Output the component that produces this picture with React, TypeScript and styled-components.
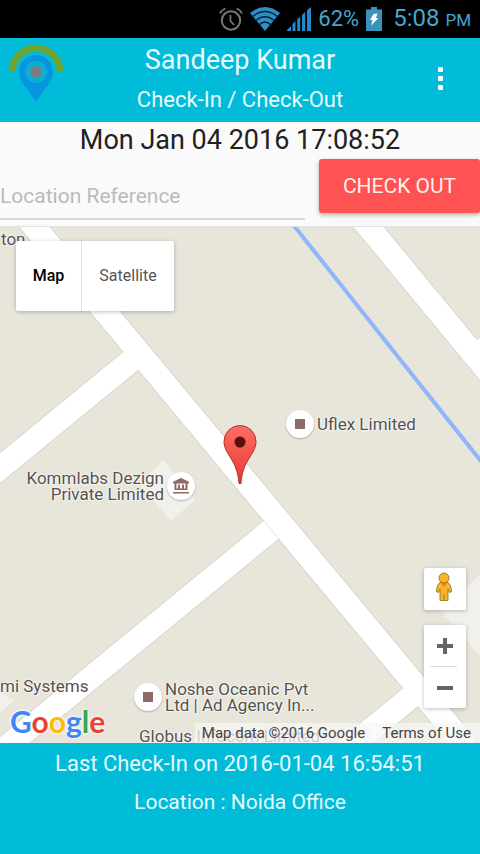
import React from 'react';
import styled, { createGlobalStyle } from 'styled-components';

const GlobalStyle = createGlobalStyle`
  *, *::before, *::after { box-sizing: border-box; }
  body { margin: 0; background: #fafafa; font-family: Roboto, "Noto Sans", sans-serif; }
  button, input { font: inherit; }
`;

const CYAN = '#00bcd8';
const HOLO = '#45a6d2';

const Screen = styled.div`
  display: flex;
  flex-direction: column;
  min-height: 100vh;
`;

const StatusBar = styled.div`
  display: flex;
  align-items: center;
  justify-content: flex-end;
  gap: 7px;
  height: 38px;
  padding-right: 9px;
  background: #000;
  color: ${HOLO};
  svg { display: block; flex: none; }
`;

const Percent = styled.span`
  font-size: 22px;
  line-height: 40px;
`;

const Clock = styled.span`
  font-size: 24px;
  line-height: 40px;
  margin-left: 4px;
  small { font-size: 17px; margin-left: 6px; }
`;

const Header = styled.header`
  display: grid;
  grid-template-columns: 72px 1fr 72px;
  align-items: center;
  height: 84px;
  background: ${CYAN};
  color: #e6fbff;
`;

const Logo = styled.svg`
  display: block;
  margin: 0 0 14px 8px;
`;

const Titles = styled.div`
  text-align: center;
  white-space: nowrap;
`;

const UserName = styled.h1`
  margin: 0;
  font-size: 27px;
  font-weight: 400;
  line-height: 40px;
`;

const PageName = styled.h2`
  margin: 0;
  font-size: 22px;
  font-weight: 400;
  line-height: 40px;
`;

const MenuButton = styled.button`
  display: flex;
  flex-direction: column;
  align-items: center;
  gap: 4px;
  justify-self: center;
  width: 48px;
  padding: 11px 0 14px;
  margin-right: 8px;
  border: 0;
  background: none;
`;

const Dot = styled.span`
  width: 5px;
  height: 5px;
  border-radius: 1px;
  background: #fff;
`;

const CheckForm = styled.form`
  display: grid;
  grid-template-columns: 1fr 161px;
  column-gap: 14px;
  align-content: start;
  background: #fafafa;
  height: 105px;
  border-bottom: 1px solid #e2e2e2;
`;

const Timestamp = styled.time`
  grid-column: 1 / -1;
  font-size: 27px;
  line-height: 37px;
  height: 37px;
  text-align: center;
  color: #212121;
`;

const LocationInput = styled.input`
  width: 100%;
  min-width: 0;
  height: 46px;
  margin-top: 15px;
  padding: 0;
  border: 0;
  border-bottom: 2px solid #d8d8d8;
  border-radius: 0;
  background: transparent;
  font-size: 21px;
  color: #212121;
  outline: 0;
  &::placeholder { color: #bababa; opacity: 1; }
`;

const CheckOutButton = styled.button`
  height: 54px;
  padding: 0;
  border: 0;
  border-radius: 3px;
  background: #ff5252;
  box-shadow: 0 2px 4px rgba(0, 0, 0, 0.3);
  color: #fff0ee;
  font-size: 21px;
`;

const MapView = styled.main`
  position: relative;
  flex: 1;
  min-height: 320px;
  overflow: hidden;
  background: #e8e5db;
`;

const MapDrawing = styled.svg`
  position: absolute;
  inset: 0;
  width: 100%;
  height: 100%;
`;

const Place = styled.div<{ $x: number; $y: number; $end?: boolean }>`
  position: absolute;
  ${p => (p.$end ? `right: calc(50% - ${p.$x}px);` : `left: calc(50% + ${p.$x}px);`)}
  top: calc(50% + ${p => p.$y}px);
  display: flex;
  align-items: center;
  flex-direction: ${p => (p.$end ? 'row-reverse' : 'row')};
  gap: 3px;
  text-align: ${p => (p.$end ? 'right' : 'left')};
  font-size: 17px;
  line-height: 16px;
  white-space: nowrap;
  color: #55524f;
  text-shadow: 0 0 2px #fff, 0 0 2px #fff, 1px 1px 1px #f4f2ec;
`;

const PlaceDot = styled.span`
  display: flex;
  align-items: center;
  justify-content: center;
  width: 28px;
  height: 28px;
  border-radius: 50%;
  background: #fff;
  box-shadow: 0 1px 2px rgba(0, 0, 0, 0.25);
`;

const Square = styled.span`
  width: 10px;
  height: 10px;
  background: #8d6a66;
`;

const Pin = styled.svg`
  position: absolute;
  left: calc(50% - 18px);
  top: calc(50% - 61px);
`;

const MapTypes = styled.div`
  position: absolute;
  left: 16px;
  top: 14px;
  display: flex;
  height: 70px;
  border-radius: 2px;
  background: #fff;
  box-shadow: 0 1px 4px rgba(0, 0, 0, 0.25);
`;

const MapType = styled.button<{ $active?: boolean }>`
  padding: 0 16px 2px;
  border: 0;
  background: none;
  font-size: 16px;
  font-weight: ${p => (p.$active ? 500 : 400)};
  color: ${p => (p.$active ? '#000' : '#565656')};
  min-width: 65px;
  & + & { min-width: 93px; border-left: 1px solid #ddd; }
`;

const Controls = styled.div`
  position: absolute;
  right: 14px;
  bottom: 35px;
  display: flex;
  flex-direction: column;
  gap: 15px;
  width: 42px;
`;

const ControlBox = styled.div`
  display: flex;
  flex-direction: column;
  border-radius: 2px;
  background: #fff;
  box-shadow: 0 1px 4px rgba(0, 0, 0, 0.25);
`;

const ControlButton = styled.button`
  display: flex;
  align-items: center;
  justify-content: center;
  width: 42px;
  height: 41px;
  padding: 0;
  border: 0;
  background: none;
`;

const StreetViewButton = styled(ControlButton)`
  height: 42px;
  padding: 0 2px 4px 0;
`;

const Divider = styled.span`
  height: 1px;
  margin: 0 9px 0 6px;
  background: #dcdcdc;
`;

const GoogleLogo = styled.a`
  position: absolute;
  left: 10px;
  bottom: 4px;
  font-family: Lato, sans-serif;
  font-size: 30px;
  font-weight: 700;
  line-height: 36px;
  text-decoration: none;
  text-shadow: 0 0 2px #fff, 0 0 2px #fff, 0 0 3px #fff;
`;

const Letter = styled.span<{ $color: string }>`
  color: ${p => p.$color};
`;

const Credits = styled.div`
  position: absolute;
  right: 0;
  bottom: 0;
  display: flex;
  gap: 1px;
  font-size: 15px;
  line-height: 20px;
  color: #444;
  > * {
    padding: 0 9px 0 7px;
    background: rgba(245, 245, 245, 0.75);
    color: inherit;
    text-decoration: none;
  }
`;

const Footer = styled.footer`
  height: 111px;
  padding-top: 2px;
  background: ${CYAN};
  color: #e6fbff;
  line-height: 38px;
  text-align: center;
`;

const FooterLine = styled.p<{ $large?: boolean }>`
  margin: 0;
  font-size: ${p => (p.$large ? 22 : 21)}px;
`;

const AlarmIcon = () => (
  <svg width="24" height="26" viewBox="0 0 24 26" fill="none" stroke="#7d7774" strokeWidth="2" aria-hidden="true">
    <circle cx="12" cy="14.5" r="9.2" />
    <path d="M11.5 9v6l3.5 4M1 7.5Q2.500 4 6.500 2.500M23 7.500Q21.500 4 17.500 2.500" strokeWidth="1.700" />
  </svg>
);

const WifiIcon = () => (
  <svg width="30" height="24" viewBox="0 0 30 24" aria-hidden="true">
    <path d="M15 24L0 6Q15-6 30 6Z" fill="#2d8fc4" />
    <g fill="none" stroke="#06202e" strokeWidth="1.300">
      <path d="M2 10Q15-1 28 10M5.500 14Q15 5.500 24.500 14M9 18Q15 12 21 18" />
    </g>
  </svg>
);

const SignalIcon = () => (
  <svg width="24" height="24" viewBox="0 0 24 24" fill="#2188cd" aria-hidden="true">
    <path d="M0 24v-1l4-4v5zM5.500 24v-7l3-3v10zM10.200 24V12.500l3-3V24zM15 24V8l3.200-3.200V24zM20 24V3l4-3v24z" />
  </svg>
);

const BatteryIcon = () => (
  <svg width="16" height="24" viewBox="0 0 16 24" aria-hidden="true">
    <path d="M5 0h6v2.500h5V24H0V2.500h5z" fill="#3b93bd" />
    <path d="M7.500 7l4-.5-1.500 4.500h2.500L5 18.500l1.500-5.500H4z" fill="#fff" />
  </svg>
);

const MuseumIcon = () => (
  <svg width="18" height="18" viewBox="0 0 18 18" fill="#8d6a66" aria-hidden="true">
    <path d="M9 1l8 3.800V6.500H1V4.800zM2.500 6h2v7h-2zM13.500 6h2v7h-2zM2.500 11.500h13V13h-13zM6 7.500h2v5H6zM10 7.500h2v5h-2zM1 15h16v1.500H1z" />
  </svg>
);

const PegmanIcon = () => (
  <svg width="18" height="30" viewBox="0 0 18 30" fill="#f7b529" stroke="#8a6c22" strokeWidth=".8" strokeLinejoin="round" aria-hidden="true">
    <path d="M5 10.500h8q2.500 1 3.800 9l-2.300 1-1.500-3.500V28.500H5V17l-1.500 3.500-2.300-1q1.300-8 3.800-9z" />
    <circle cx="9" cy="6" r="5" />
    <path d="M5.500 10.800h7L9 15z" fill="#ef7d1a" stroke="none" />
    <path d="M9 22v6.500" />
  </svg>
);

const ROADS = [
  'M-222-278L227 262',
  'M-252-7L-102-130',
  'M-252 277L31 45',
  'M177 207L100 270',
  'M117-272L255-105',
  'M237-130L262-151',
].join('');

const GOOGLE: [string, string][] = [
  ['G', '#4285f4'], ['o', '#ea4335'], ['o', '#fbbc05'],
  ['g', '#4285f4'], ['l', '#34a853'], ['e', '#ea4335'],
];

export default function App() {
  return (
    <Screen>
      <GlobalStyle />
      <StatusBar>
        <AlarmIcon />
        <WifiIcon />
        <SignalIcon />
        <Percent>62%</Percent>
        <BatteryIcon />
        <Clock>5:08<small>PM</small></Clock>
      </StatusBar>

      <Header>
        <Logo width="56" height="60" viewBox="0 0 56 60" aria-hidden="true">
          <path d="M4 29a24 24 0 0 1 48 0" fill="none" stroke="#6ca536" strokeWidth="7" />
          <path d="M28 12a17 17 0 0 1 17 17c0 10-10 18-17 30-7-12-17-20-17-30a17 17 0 0 1 17-17z" fill="#0795e0" />
          <circle cx="28" cy="29" r="11" fill="#08b0d8" />
          <circle cx="28" cy="29" r="6" fill="#777f84" />
        </Logo>
        <Titles>
          <UserName>Sandeep Kumar</UserName>
          <PageName>Check-In / Check-Out</PageName>
        </Titles>
        <MenuButton type="button" aria-label="Menu"><Dot /><Dot /><Dot /></MenuButton>
      </Header>

      <CheckForm onSubmit={e => e.preventDefault()}>
        <Timestamp>Mon Jan 04 2016 17:08:52</Timestamp>
        <LocationInput type="text" aria-label="Location Reference" placeholder="Location Reference" />
        <CheckOutButton type="submit">CHECK OUT</CheckOutButton>
      </CheckForm>

      <MapView>
        <MapDrawing viewBox="-240 -258 480 516" preserveAspectRatio="xMidYMid slice" aria-hidden="true">
          <path d="M-77-25L-45 15L-69 36L-101 0zM200 125L240 90V171zM-240 207L-226 215L-240 228z" fill="#f1f0ea" />
          <path d={ROADS} fill="none" stroke="#d8d6cd" strokeWidth="25" />
          <path d={ROADS} fill="none" stroke="#fff" strokeWidth="23" />
          <path d="M47-268L248-15" fill="none" stroke="#8fb5fb" strokeWidth="4" />
        </MapDrawing>

        <Place $x={-239} $y={-254}>ton</Place>
        <Place $x={46} $y={-75}><PlaceDot><Square /></PlaceDot>Uflex Limited</Place>
        <Place $x={-45} $y={-15} $end>
          <PlaceDot><MuseumIcon /></PlaceDot>
          <span>Kommlabs Dezign<br />Private Limited</span>
        </Place>
        <Place $x={-240} $y={193}>mi Systems</Place>
        <Place $x={-106} $y={196}>
          <PlaceDot><Square /></PlaceDot>
          <span>Noshe Oceanic Pvt<br />Ltd | Ad Agency In...</span>
        </Place>
        <Place $x={-101} $y={243}>Globus Infocom Limited</Place>

        <Pin width="36" height="62" viewBox="0 0 36 62" aria-hidden="true">
          <defs>
            <linearGradient id="pin" x1="0" y1="0" x2="0" y2="1">
              <stop offset="0" stopColor="#fb6f67" />
              <stop offset="1" stopColor="#e8382f" />
            </linearGradient>
          </defs>
          <path d="M18 1.500a16 16 0 0 1 16 16c0 13-13.500 18-15 42h-2C15.500 35.500 2 30.500 2 17.500a16 16 0 0 1 16-16z" fill="url(#pin)" stroke="#b5322c" />
          <circle cx="18" cy="18" r="5.500" fill="#5e0d10" />
        </Pin>

        <MapTypes>
          <MapType type="button" $active>Map</MapType>
          <MapType type="button">Satellite</MapType>
        </MapTypes>

        <Controls>
          <ControlBox>
            <StreetViewButton type="button" aria-label="Street View"><PegmanIcon /></StreetViewButton>
          </ControlBox>
          <ControlBox>
            <ControlButton type="button" aria-label="Zoom in">
              <svg width="16" height="16" viewBox="0 0 16 16"><path d="M8 0v16M0 8h16" stroke="#666" strokeWidth="4" /></svg>
            </ControlButton>
            <Divider />
            <ControlButton type="button" aria-label="Zoom out">
              <svg width="16" height="16" viewBox="0 0 16 16"><path d="M0 8h16" stroke="#666" strokeWidth="4" /></svg>
            </ControlButton>
          </ControlBox>
        </Controls>

        <GoogleLogo href="#" aria-label="Google">
          {GOOGLE.map(([letter, color], i) => <Letter key={i} $color={color}>{letter}</Letter>)}
        </GoogleLogo>
        <Credits>
          <span>Map data ©2016 Google</span>
          <a href="#">Terms of Use</a>
        </Credits>
      </MapView>

      <Footer>
        <FooterLine $large>Last Check-In on 2016-01-04 16:54:51</FooterLine>
        <FooterLine>Location : Noida Office</FooterLine>
      </Footer>
    </Screen>
  );
}
